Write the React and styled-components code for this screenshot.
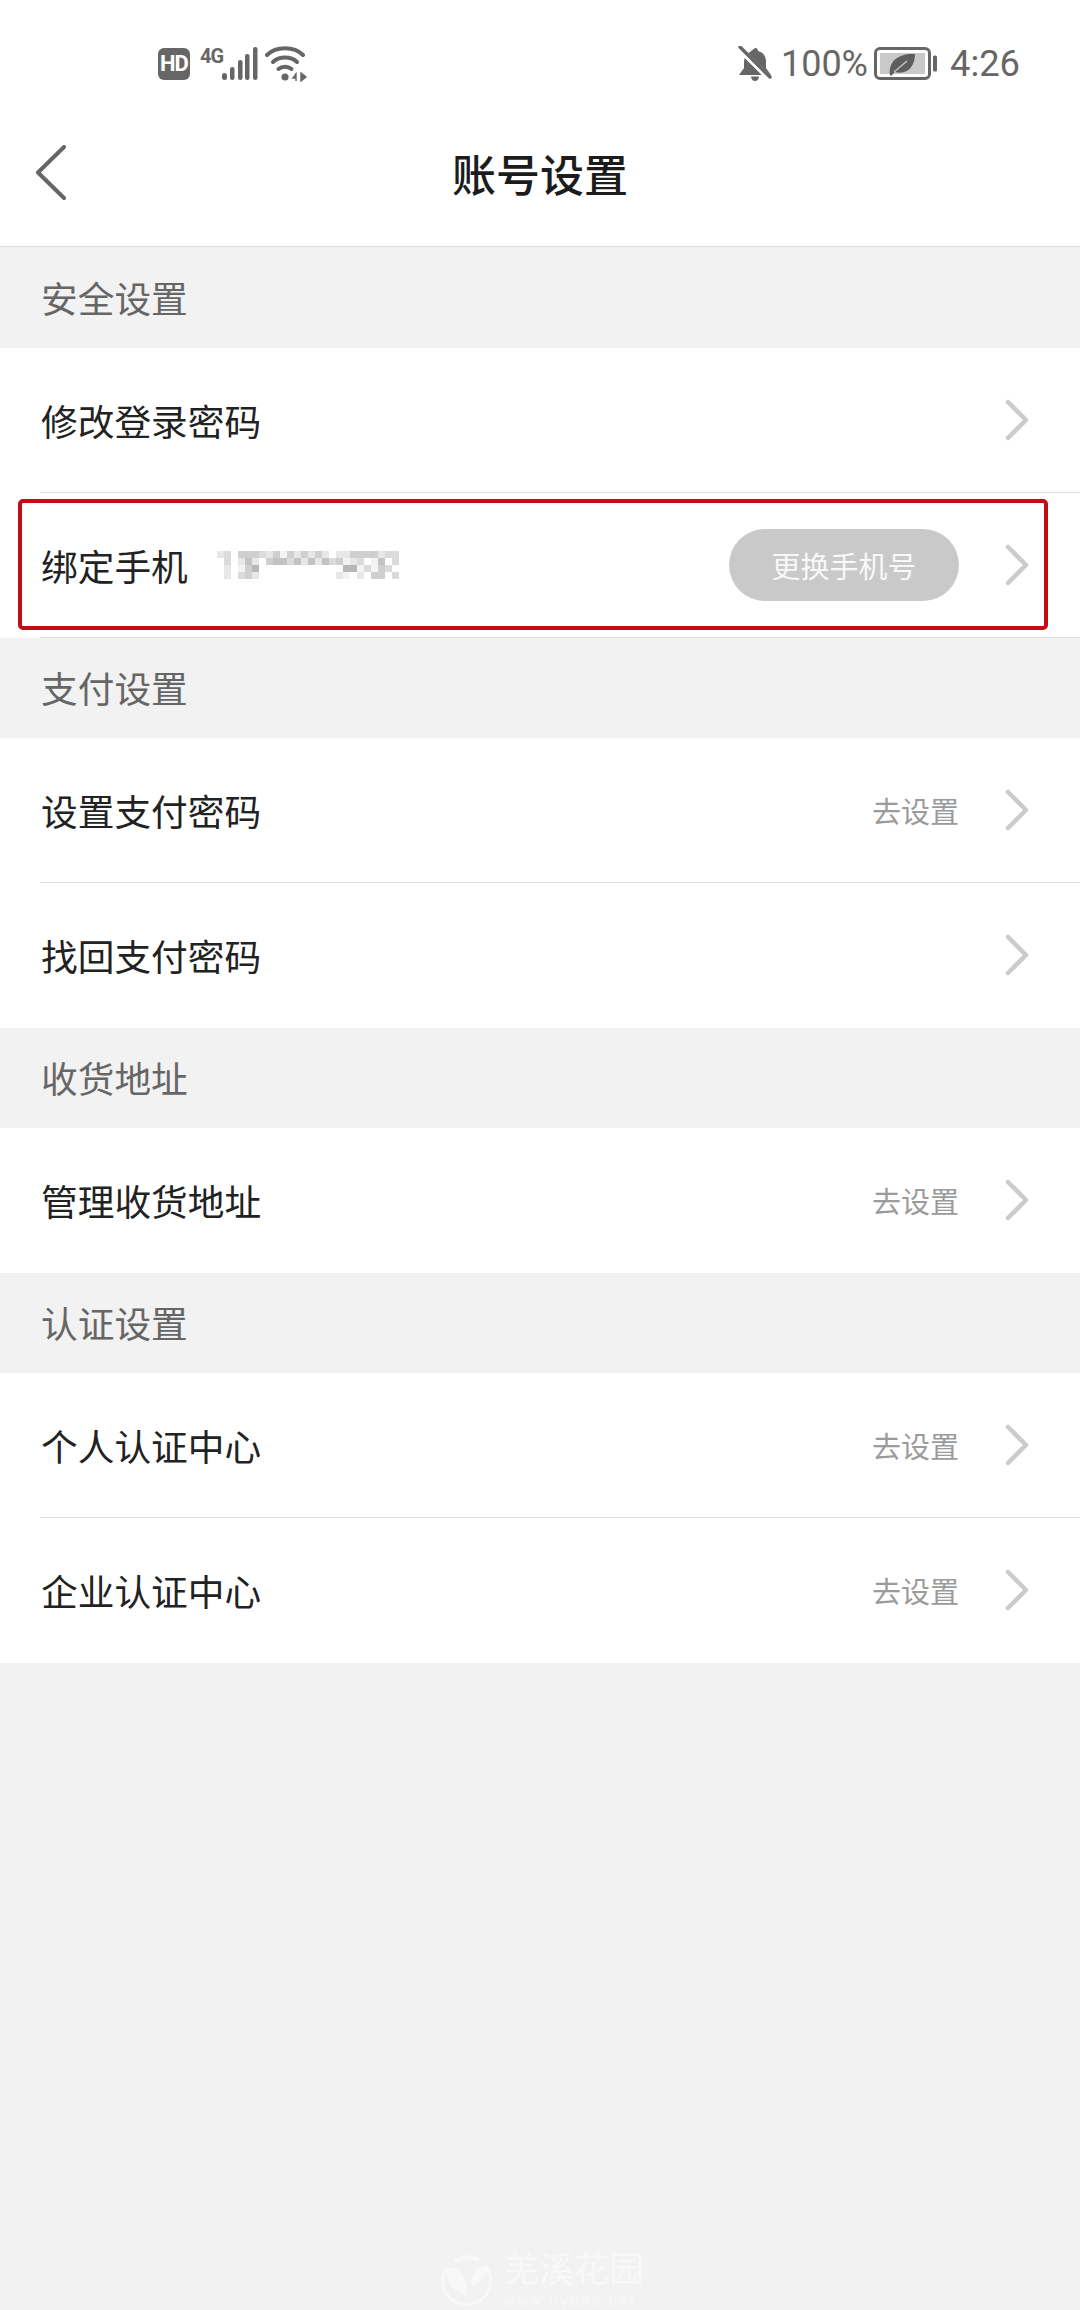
import React from "react"
import styled, { createGlobalStyle } from "styled-components"

const GlobalStyle = createGlobalStyle`
  html, body {
    margin: 0;
    padding: 0;
    background: #f2f2f2;
  }
  body {
    font-family: "Noto Sans CJK SC", "Noto Sans", sans-serif;
  }
`

const sections = [
  {
    title: "安全设置",
    rows: [
      { label: "修改登录密码", divider: true },
      { label: "绑定手机", phone: true, button: "更换手机号", highlighted: true, divider: true },
    ],
  },
  {
    title: "支付设置",
    rows: [{ label: "设置支付密码", hint: "去设置", divider: true }, { label: "找回支付密码" }],
  },
  {
    title: "收货地址",
    rows: [{ label: "管理收货地址", hint: "去设置" }],
  },
  {
    title: "认证设置",
    rows: [
      { label: "个人认证中心", hint: "去设置", divider: true },
      { label: "企业认证中心", hint: "去设置" },
    ],
  },
]

// mosaic over the phone number, one digit per cell (0 = white, 9 = darkest)
const MOSAIC = [
  "23044432414242420224444233",
  "03025204553525253412301503",
  "02014600000000000066131430",
  "02034200000000000210204403",
]

const PhoneMosaic = () => (
  <MosaicSvg width="182" height="28" viewBox="0 0 182 28">
    {MOSAIC.map((line, y) =>
      line.split("").map((cell, x) => (
        <rect
          key={`${x}-${y}`}
          x={x * 7}
          y={y * 7}
          width="7"
          height="7"
          fill="#777"
          opacity={Number(cell) * 0.088}
        />
      ))
    )}
  </MosaicSvg>
)

const Chevron = () => (
  <ChevronSvg width="24" height="42" viewBox="0 0 24 42">
    <path d="M3 3 L21 21 L3 39" fill="none" stroke="#cbcbcb" strokeWidth="4.5" strokeLinecap="round" strokeLinejoin="round" />
  </ChevronSvg>
)

const BackArrow = () => (
  <BackSvg width="34" height="56" viewBox="0 0 34 56">
    <path d="M30 2 L4 27.5 L30 53" fill="none" stroke="#666" strokeWidth="4" strokeLinecap="round" strokeLinejoin="round" />
  </BackSvg>
)

const SignalBars = () => (
  <svg width="38" height="34" viewBox="0 0 38 34">
    <g fill="#666">
      <rect x="0" y="26" width="5" height="7" rx="2.5" />
      <rect x="8" y="20" width="4.5" height="13" rx="2.2" />
      <rect x="16" y="13" width="4.5" height="20" rx="2.2" />
      <rect x="23" y="7" width="4.5" height="26" rx="2.2" />
      <rect x="31" y="0" width="4.5" height="33" rx="2.2" />
    </g>
  </svg>
)

const WifiIcon = () => (
  <svg width="44" height="36" viewBox="0 0 44 36">
    <g fill="none" stroke="#666" strokeWidth="4" strokeLinecap="round">
      <path d="M2 9 C11 0 29 0 38 9" />
      <path d="M8 16 C14 10 26 10 32 16" />
      <path d="M13.5 23 C17 20 23 20 26.5 23" />
    </g>
    <circle cx="20" cy="31" r="3.6" fill="#666" />
    <path d="M31 28 L28 32 L31 32 Z M31 27 L31 35 M36 27 L36 35 L41 31 Z" fill="#666" stroke="#666" strokeWidth="1.4" />
  </svg>
)

const MutedBell = () => (
  <svg width="36" height="36" viewBox="0 0 36 36">
    <path
      d="M18 2 C20 2 21 3 21 5 C27 6.5 29 11 29 16 L29 22 L34 29 L2 29 L7 22 L7 16 C7 13 8 11 9 9 Z"
      fill="#666"
    />
    <path d="M14 30.5 L22 30.5 C22 33 20 35 18 35 C16 35 14 33 14 30.5 Z" fill="#666" />
    <path d="M1 1 L34 34" stroke="#fff" strokeWidth="6" />
    <path d="M3 1 L33 31" stroke="#666" strokeWidth="3.4" strokeLinecap="round" />
  </svg>
)

const BatteryLeaf = () => (
  <BatterySvg width="64" height="34" viewBox="0 0 64 34">
    <rect x="1.5" y="1.5" width="54" height="30" rx="4.5" fill="none" stroke="#666" strokeWidth="3" />
    <rect x="6" y="6" width="45" height="21" fill="#c9c9c9" />
    <rect x="59" y="8.5" width="4" height="16" rx="1.5" fill="#666" />
    <path d="M16 28 C14 14 25 6 41 7 C41 20 33 28 21 25 L17 29 Z" fill="#5d5d5d" />
    <path d="M20 25 L33 14" stroke="#c9c9c9" strokeWidth="1.4" />
  </BatterySvg>
)

const WatermarkLogo = () => (
  <LogoSvg width="52" height="52" viewBox="0 0 52 52">
    <g fill="none" stroke="#f8f8f8" strokeWidth="3">
      <path d="M6 14 A24 24 0 1 0 47 14" />
      <path d="M14 8 C22 2 32 2 39 6" strokeWidth="4" />
    </g>
    <path d="M5 15 C18 10 30 24 26 42 C14 38 6 28 5 15 Z" fill="#f8f8f8" />
    <path d="M31 28 C31 20 38 13 48 11 C48 20 42 29 33 33 Z" fill="#f8f8f8" />
  </LogoSvg>
)

const App = () => (
  <Page>
    <GlobalStyle />
    <TopBar>
      <StatusBar>
        <StatusGroup>
          <HdBadge>HD</HdBadge>
          <NetType>4G</NetType>
          <SignalBars />
          <WifiSlot>
            <WifiIcon />
          </WifiSlot>
        </StatusGroup>
        <StatusGroup>
          <MutedBell />
          <StatusText>100%</StatusText>
          <BatteryLeaf />
          <StatusTime>4:26</StatusTime>
        </StatusGroup>
      </StatusBar>
      <TitleBar>
        <BackArrow />
        <Title>账号设置</Title>
      </TitleBar>
    </TopBar>

    {sections.map(section => (
      <section key={section.title}>
        <SectionTitle>{section.title}</SectionTitle>
        {section.rows.map(row => (
          <Row key={row.label} $divider={row.divider}>
            <RowLabel>{row.label}</RowLabel>
            {row.phone && <PhoneMosaic />}
            <Spacer />
            {row.hint && <Hint>{row.hint}</Hint>}
            {row.button && <PillButton>{row.button}</PillButton>}
            <Chevron />
            {row.highlighted && <HighlightFrame />}
          </Row>
        ))}
      </section>
    ))}

    <Watermark>
      <WatermarkLogo />
      <WatermarkText>
        <WatermarkName>羌溪花园</WatermarkName>
        <WatermarkUrl>www.hybbs.net</WatermarkUrl>
      </WatermarkText>
    </Watermark>
  </Page>
)

export default App

const Page = styled.div`
  position: relative;
  width: 1080px;
  height: 2310px;
  overflow: hidden;
  background: #f2f2f2;
`

const TopBar = styled.header`
  margin-bottom: 1px;
  background: #fff;
  border-bottom: 1px solid #dcdcdc;
`

const StatusBar = styled.div`
  height: 86px;
  padding: 42px 60px 0 158px;
  display: flex;
  align-items: center;
  justify-content: space-between;
  color: #666;
  box-sizing: border-box;
`

const StatusGroup = styled.div`
  display: flex;
  align-items: center;
`

const HdBadge = styled.span`
  width: 32px;
  height: 32px;
  border-radius: 6px;
  background: #666;
  color: #fff;
  font: 700 22px/32px Roboto, sans-serif;
  letter-spacing: -1px;
  text-align: center;
`

const NetType = styled.span`
  margin: -17px 0 0 10px;
  width: 22px;
  font: 700 20px/20px Roboto, sans-serif;
  letter-spacing: -1px;
`

const WifiSlot = styled.span`
  display: flex;
  margin-left: 5px;
`

const StatusText = styled.span`
  margin-left: 8px;
  font: 400 36px/40px Roboto, sans-serif;
`

const BatterySvg = styled.svg`
  display: block;
  margin-left: 6px;
`

const StatusTime = styled.span`
  margin-left: 12px;
  font: 400 36.3px/40px Roboto, sans-serif;
`

const TitleBar = styled.div`
  position: relative;
  height: 160px;
  padding: 14px 0 0 34px;
  display: flex;
  align-items: center;
  box-sizing: border-box;
`

const BackSvg = styled.svg`
  display: block;
`

const Title = styled.h1`
  position: absolute;
  left: 0;
  right: 0;
  margin: 0;
  text-align: center;
  font-size: 44px;
  font-weight: 500;
  line-height: 60px;
  color: #1c1c1c;
`

const SectionTitle = styled.div`
  height: 100px;
  padding: 0 0 2px 41px;
  display: flex;
  align-items: center;
  font-size: 36.7px;
  color: #666;
  background: #f2f2f2;
  box-sizing: border-box;
`

const Row = styled.div`
  position: relative;
  height: 145px;
  padding: 0 51px 2px 41px;
  display: flex;
  align-items: center;
  background: #fff;
  box-sizing: border-box;

  &::after {
    content: "";
    display: ${props => (props.$divider ? "block" : "none")};
    position: absolute;
    left: 40px;
    right: 0;
    bottom: 0;
    height: 1px;
    background: #dedede;
  }
`

const RowLabel = styled.span`
  font-size: 36.7px;
  color: #222;
`

const MosaicSvg = styled.svg`
  display: block;
  margin-left: 29px;
`

const Spacer = styled.div`
  flex: 1;
`

const Hint = styled.span`
  font-size: 29px;
  color: #9b9b9b;
`

const PillButton = styled.span`
  width: 230px;
  height: 72px;
  border-radius: 36px;
  background: #c9c9c9;
  color: #f8f8f8;
  font-size: 29px;
  line-height: 72px;
  text-align: center;
`

const ChevronSvg = styled.svg`
  display: block;
  margin-left: 46px;
`

const HighlightFrame = styled.div`
  position: absolute;
  top: 6px;
  left: 18px;
  width: 1030px;
  height: 131px;
  border: 4px solid #c30d16;
  border-radius: 5px;
  box-sizing: border-box;
`

const Watermark = styled.div`
  position: absolute;
  left: 440px;
  top: 2247px;
  display: flex;
  align-items: center;
  gap: 12px;
  color: #f8f8f8;
`

const LogoSvg = styled.svg`
  display: block;
  margin-top: 4px;
`

const WatermarkText = styled.div`
  display: flex;
  flex-direction: column;
  gap: 6px;
`

const WatermarkName = styled.span`
  font-size: 35px;
  line-height: 40px;
`

const WatermarkUrl = styled.span`
  font: 14px/16px "Liberation Sans", sans-serif;
  letter-spacing: 3px;
`
